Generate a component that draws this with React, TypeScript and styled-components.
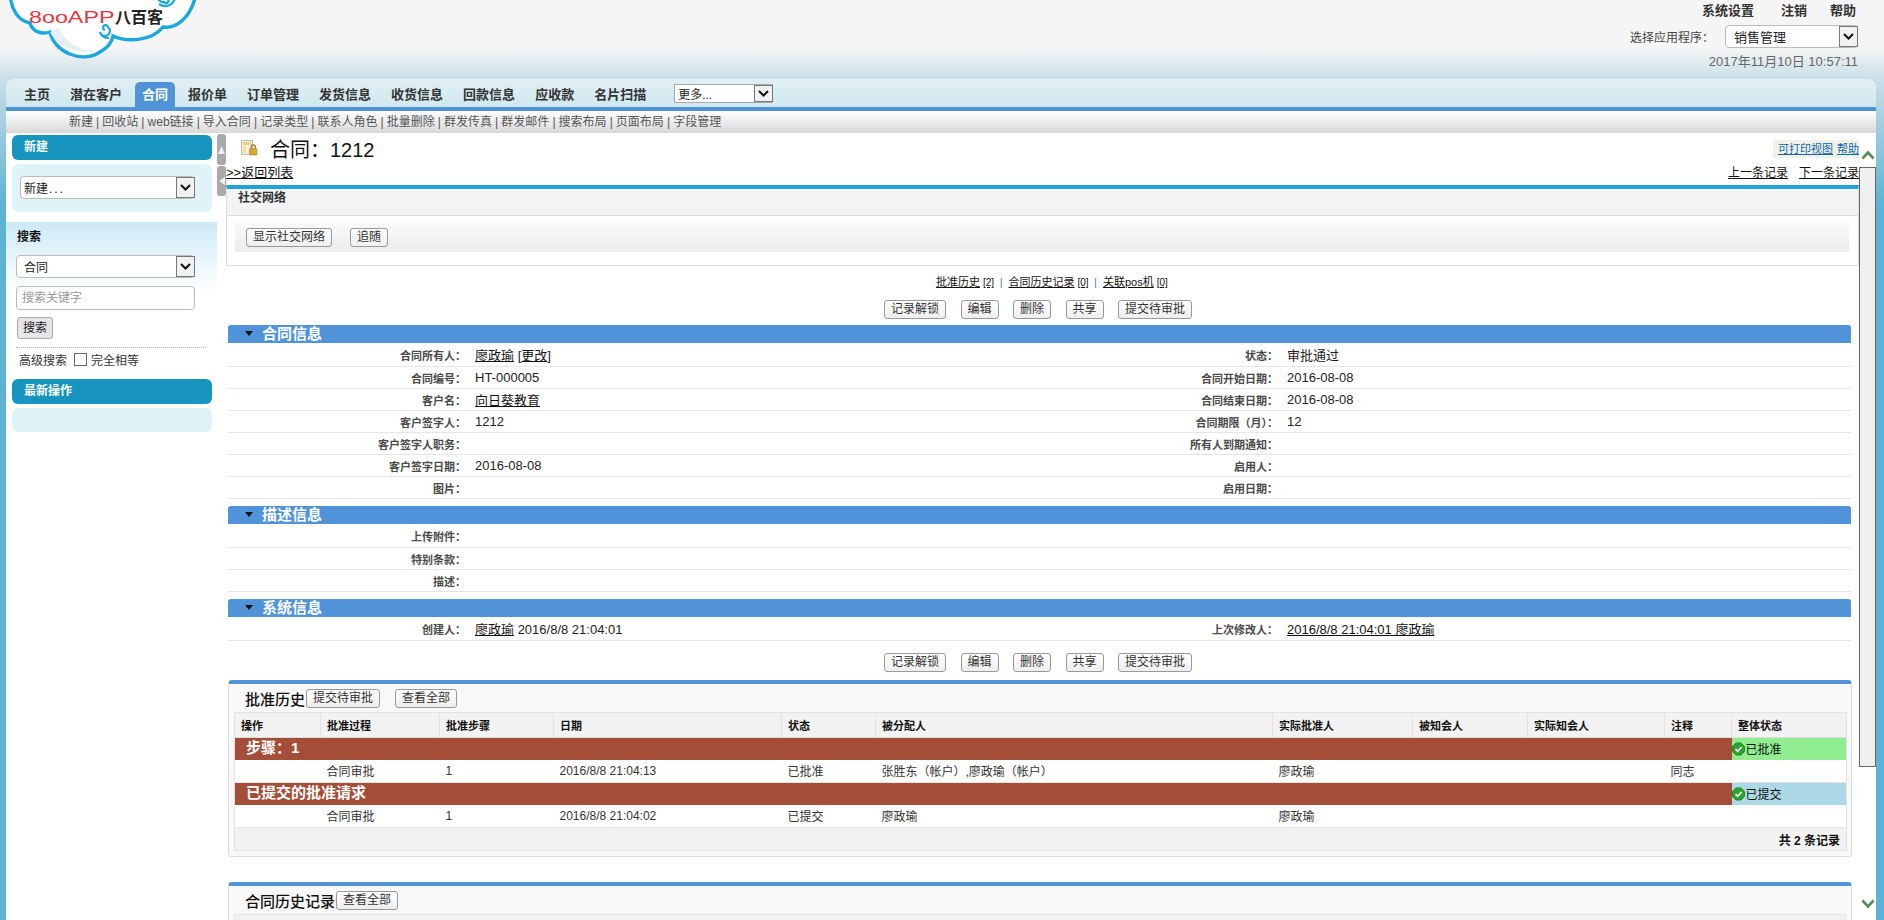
import React from 'react'
import styled, { createGlobalStyle } from 'styled-components'

const Global = createGlobalStyle`
  * { box-sizing: border-box; }
  html, body { margin: 0; padding: 0; height: 100%; overflow: hidden; background: #fff; }
  body { font-family: "Liberation Sans", "Noto Sans CJK SC", sans-serif; font-size: 12px; color: #222; }
  a { color: #111; }
`

const Page = styled.div`
  width: 1884px;
  height: 920px;
  overflow: hidden;
  display: flex;
  flex-direction: column;
`

const Header = styled.header`
  height: 79px;
  flex: none;
  display: flex;
  justify-content: space-between;
  background: linear-gradient(#f5f5f5 0, #f5f5f5 48px, #c8dfe8 79px);
`

const LogoBox = styled.div`
  position: relative;
  width: 200px;
  height: 60px;
  margin-left: 8px;
`

const LogoSvg = styled.svg`
  position: absolute;
  left: 0;
  top: 0;
`

const LogoRed = styled.span`
  position: absolute;
  left: 21px;
  top: 8px;
  font-size: 17px;
  line-height: 20px;
  color: #e8353f;
  white-space: nowrap;
  transform: scaleX(1.37);
  transform-origin: left center;
`

const LogoBlack = styled.span`
  position: absolute;
  left: 107px;
  top: 7px;
  font-size: 16px;
  line-height: 22px;
  font-weight: 700;
  color: #222;
  white-space: nowrap;
`

const TopRight = styled.div`
  width: 300px;
  padding: 3px 26px 0 0;
  display: flex;
  flex-direction: column;
  align-items: flex-end;
`

const TopLinks = styled.div`
  display: flex;
  font-size: 13px;
  font-weight: 700;
  line-height: 16px;
  color: #333;
  padding-right: 2px;
  span + span { margin-left: 27px; }
  span:last-child { margin-left: 23px; }
`

const AppRow = styled.div`
  display: flex;
  align-items: center;
  gap: 11px;
  margin-top: 6px;
  color: #444;
`

const DateText = styled.div`
  margin-top: 6px;
  font-size: 13px;
  line-height: 16px;
  color: #666;
`

const Select = styled.div<{ $w: number; $h?: number; $fs?: number; $pad?: number }>`
  width: ${p => p.$w}px;
  height: ${p => p.$h ?? 23}px;
  flex: none;
  display: flex;
  align-items: center;
  justify-content: space-between;
  background: #fff;
  border: 1px solid #bbb;
  border-radius: 4px;
  font-size: ${p => p.$fs ?? 12}px;
  color: #222;
  padding-left: ${p => p.$pad ?? 3}px;
`

const Arrow = styled.span`
  width: 19px;
  height: 100%;
  display: flex;
  align-items: center;
  justify-content: center;
  background: #f1f1f1;
  border: 1px solid #777;
  margin-right: -1px;
`

const Chevron = () => (
  <Arrow>
    <svg width="11" height="7" viewBox="0 0 11 7"><path d="M1 1l4.5 4.5L10 1" fill="none" stroke="#111" strokeWidth="2" /></svg>
  </Arrow>
)

const Dots = styled.span`
  letter-spacing: 2px;
  margin-left: 1px;
`

const Shell = styled.div`
  flex: 1;
  min-height: 0;
  display: flex;
  flex-direction: column;
  padding: 0 8px 0 6px;
  background: linear-gradient(#c8dfe8 0, #5db3d3 125px);
`

const TabBar = styled.nav`
  height: 28px;
  flex: none;
  display: flex;
  align-items: flex-end;
  padding-left: 8px;
  border-radius: 8px 8px 0 0;
  background: linear-gradient(#e1eff4, #cfe8ee);
`

const Tab = styled.div<{ $active?: boolean }>`
  height: 25px;
  line-height: 26px;
  font-size: 13px;
  font-weight: 700;
  white-space: nowrap;
  color: ${p => (p.$active ? '#fff' : '#333')};
  background: ${p => (p.$active ? '#5093d8' : 'transparent')};
  padding: 0 ${p => (p.$active ? 7 : 10)}px;
  margin: 0 ${p => (p.$active ? 3 : 0)}px;
  border-radius: 5px 5px 0 0;
`

const MoreSelect = styled(Select)`
  margin: 0 0 4px 18px;
  border-radius: 0;
  border-color: #aaa;
`

const BlueLine = styled.div`
  height: 4px;
  flex: none;
  background: #5093d8;
`

const SubNav = styled.div`
  height: 22px;
  flex: none;
  padding-left: 63px;
  line-height: 22px;
  word-spacing: -0.25px;
  color: #555;
  background: linear-gradient(#fff, #d8d8d8);
`

const Content = styled.div`
  flex: 1;
  min-height: 0;
  display: grid;
  grid-template-columns: 211px 9px 1633px 17px;
  background: #fff;
  overflow: hidden;
`

const Sidebar = styled.aside`
  padding-top: 2px;
`

const SideHead = styled.div`
  height: 25px;
  margin: 0 5px 0 6px;
  padding-left: 12px;
  line-height: 25px;
  font-weight: 700;
  color: #fff;
  background: #1795bf;
  border-radius: 6px;
`

const SideBody = styled.div<{ $h: number }>`
  height: ${p => p.$h}px;
  margin: 4px 5px 0 6px;
  padding: 12px 0 0 8px;
  background: #dff3f9;
  border-radius: 6px;
`

const SearchPanel = styled.div`
  margin: 10px 0 9px;
  padding: 8px 0 0 10px;
  background: linear-gradient(#cdeaf6, #fff 71px);
`

const SearchLabel = styled.div`
  font-weight: 700;
  line-height: 14px;
  color: #111;
  margin-left: 1px;
`

const SearchSelect = styled(Select)`
  margin-top: 11px;
`

const Keyword = styled.div`
  width: 179px;
  height: 24px;
  margin-top: 8px;
  padding-left: 5px;
  line-height: 22px;
  color: #999;
  background: #fff;
  border: 1px solid #bbb;
  border-radius: 4px;
`

const SearchButton = styled.div`
  width: 36px;
  height: 22px;
  margin: 7px 0 0 1px;
  text-align: center;
  line-height: 20px;
  color: #222;
  background: #e6e6e6;
  border: 1px solid #aaa;
  border-radius: 3px;
`

const Dotted = styled.div`
  width: 190px;
  margin-top: 8px;
  border-top: 1px dotted #aaa;
`

const AdvRow = styled.div`
  display: flex;
  align-items: center;
  height: 22px;
  margin-left: 3px;
  color: #333;
`

const Check = styled.span`
  width: 13px;
  height: 13px;
  margin: 0 4px 0 7px;
  background: #fff;
  border: 1px solid #666;
`

const HandleColumn = styled.div`
  padding-top: 1px;
`

const Handle = styled.div<{ $h: number }>`
  height: ${p => p.$h}px;
  margin-bottom: 1px;
  display: flex;
  align-items: center;
  justify-content: center;
  background: #a9a9a9;
  border-radius: 3px;
`

const Main = styled.main`
  min-width: 0;
  overflow: hidden;
`

const TitleRow = styled.div`
  height: 32px;
  display: flex;
  justify-content: space-between;
  padding-left: 15px;
`

const TitleLeft = styled.div`
  display: flex;
  align-items: flex-start;
  gap: 12px;
  padding-top: 7px;
`

const TitleText = styled.h1`
  margin: 1px 0 0;
  font-size: 20px;
  font-weight: 400;
  line-height: 19px;
  color: #111;
`

const PrintBox = styled.div`
  height: 18px;
  width: 86px;
  margin-top: 7px;
  text-align: right;
  font-size: 11px;
  line-height: 18px;
  background: #f1f1e9;
  a { color: #0a66a8; margin-left: 4px; }
`

const BackRow = styled.div`
  height: 20px;
  padding-top: 1px;
  display: flex;
  justify-content: space-between;
  line-height: 14px;
`

const BackLink = styled.a`
  font-size: 13px;
`

const PrevNext = styled.div`
  display: flex;
  gap: 11px;
`

const SocialBox = styled.section`
  height: 81px;
  border-top: 4px solid #21a3d3;
  border-left: 1px solid #ddd;
  border-right: 1px solid #ddd;
  border-bottom: 1px solid #ddd;
`

const SocialHead = styled.div`
  height: 27px;
  padding: 2px 0 0 11px;
  line-height: 14px;
  font-weight: 700;
  color: #333;
  background: #f3f3f3;
  border-bottom: 1px solid #ddd;
`

const SocialBar = styled.div`
  height: 31px;
  margin: 5px 9px 0 8px;
  padding: 7px 0 0 11px;
  display: flex;
  gap: 18px;
  background: linear-gradient(#fafafa, #ececec);
`

const Button = styled.span`
  display: inline-block;
  height: 19px;
  padding: 0 6px;
  line-height: 17px;
  font-size: 12px;
  white-space: nowrap;
  color: #333;
  background: linear-gradient(#fff, #eee);
  border: 1px solid #999;
  border-radius: 3px;
`

const RelatedLinks = styled.div`
  height: 34px;
  padding: 9px 0 0 710px;
  font-size: 11px;
  line-height: 14px;
  color: #555;
  a { margin-right: 3px; }
  a + a { font-size: 10px; margin-right: 0; }
  i { font-style: normal; margin: 0 6px 0 5.5px; color: #48a; }
`

const ButtonRow = styled.div<{ $top?: number }>`
  display: flex;
  gap: 14.5px;
  margin-top: ${p => p.$top ?? 0}px;
  padding-left: 658px;
`

const Section = styled.div<{ $top: number }>`
  width: 1623px;
  height: 18px;
  margin: ${p => p.$top}px 0 0 2px;
  display: flex;
  align-items: center;
  gap: 9px;
  padding: 0 0 1px 17px;
  font-size: 15px;
  line-height: 16px;
  font-weight: 700;
  color: #fff;
  background: #5093d8;
  border-radius: 3px 3px 0 0;
`

const Triangle = styled.span`
  width: 0;
  height: 0;
  border-left: 4px solid transparent;
  border-right: 4px solid transparent;
  border-top: 5px solid #111;
`

const Row = styled.div<{ $first?: boolean }>`
  width: 1623px;
  height: ${p => (p.$first ? 24 : 22)}px;
  margin-left: 2px;
  display: grid;
  grid-template-columns: 238px 574px 238px 1fr;
  align-items: center;
  border-bottom: 1px solid #e6e6e6;
`

const Label = styled.div`
  text-align: right;
  font-size: 11px;
  font-weight: 700;
  color: #4a4a4a;
`

const Value = styled.div`
  padding-left: 9px;
  font-size: 13px;
  color: #222;
`

const Panel = styled.section<{ $top: number }>`
  width: 1624px;
  margin: ${p => p.$top}px 0 0 2px;
  padding: 0 5px;
  background: #f8f8f8;
  border: 1px solid #ddd;
  border-top: 4px solid #5093d8;
  border-radius: 4px;
`

const PanelHead = styled.div`
  height: 28px;
  display: flex;
  align-items: center;
  gap: 15px;
  padding-left: 11px;
`

const PanelTitle = styled.h3`
  margin: 0 -15px 0 0;
  font-size: 15px;
  font-weight: 500;
  color: #111;
`

const HeadButton = styled(Button)`
  margin-left: 1px;
`

const Table = styled.table`
  width: 1612px;
  table-layout: fixed;
  border-collapse: collapse;
  background: #fff;
  border: 1px solid #e3e3e3;
  margin-bottom: 5px;
`

const Th = styled.th`
  height: 25px;
  padding: 0 0 0 6px;
  text-align: left;
  font-size: 11px;
  font-weight: 700;
  color: #111;
  background: #f2f2f2;
  border-right: 1px solid #e3e3e3;
  border-bottom: 1px solid #ddd;
`

const Td = styled.td`
  height: 23px;
  padding: 0 0 0 6px;
  font-size: 12px;
  color: #333;
  white-space: nowrap;
  border-bottom: 1px solid #e6e6e6;
`

const GroupTd = styled.td`
  height: 22px;
  padding: 0 0 2px 11px;
  font-size: 15px;
  line-height: 18px;
  font-weight: 700;
  color: #fff;
  background: #a44e39;
`

const StatusTd = styled.td<{ $bg: string }>`
  padding: 0;
  font-size: 12px;
  color: #111;
  background: ${p => p.$bg};
`

const StatusInner = styled.span`
  display: flex;
  align-items: center;
  gap: 1px;
  svg { flex: none; }
`

const TableFoot = styled.td`
  height: 23px;
  padding-right: 6px;
  text-align: right;
  font-weight: 700;
  color: #111;
  background: #f2f2f2;
`

const CutBox = styled.div`
  height: 30px;
  padding: 3px 0 0 7px;
  font-weight: 700;
  color: #111;
  background: #f2f2f2;
  border: 1px solid #e3e3e3;
`

const Scroll = styled.div`
  padding-top: 17px;
  display: flex;
  flex-direction: column;
  align-items: center;
  overflow: hidden;
`

const Thumb = styled.div`
  width: 17px;
  height: 600px;
  margin-top: 7px;
  flex: none;
  background: #f0f0f0;
  border: 1px solid #666;
`

const DownArrow = styled.div`
  margin-top: 131px;
`

const ScrollChevron = ({ up }: { up?: boolean }) => (
  <svg width="14" height="10" viewBox="0 0 14 10">
    <path d={up ? 'M1.5 8.5L7 2.5l5.5 6' : 'M1.5 1.5L7 7.5l5.5-6'} fill="none" stroke="#5d8a5d" strokeWidth="2.6" />
  </svg>
)

const Logo = () => (
  <LogoSvg width="200" height="60" viewBox="0 0 200 60">
    <path d="M2 -6C3 9 10 21 22 23C24 31 33 35 42 32C46 52 74 64 92 52C99 48 104 42 105 36C118 42 143 42 155 27C168 29 183 18 188 -6Z" fill="#fff" stroke="#19a7de" strokeWidth="3.4" />
    <path d="M42 32C50 47 70 56 88 50C72 51 58 44 51 28Z" fill="#e6eef4" />
    <path d="M97 30a2.500 2.500 0 1 1 3-3a5 5 0 1 1-8 5c1 4 5 6 9 6" fill="#fff" stroke="#19a7de" strokeWidth="2.2" />
    <path d="M160 -1a2.500 2.500 0 0 1-4 3a5 5 0 0 1-6-5" fill="none" stroke="#19a7de" strokeWidth="2.2" />
    <path d="M151 4c6 4 14 2 16-6" fill="none" stroke="#19a7de" strokeWidth="2.2" />
  </LogoSvg>
)

const RecordIcon = () => (
  <svg width="17" height="16" viewBox="0 0 17 16">
    <rect x="0.5" y="0.5" width="11" height="14" fill="#f4f1e6" stroke="#bbb" />
    <rect x="2" y="2" width="8" height="3" fill="#f1cf73" />
    <rect x="2" y="6" width="3" height="7" fill="#f5dd9b" />
    <path d="M10 8.5V7a2.2 2.2 0 0 1 4.4 0v1.5" fill="none" stroke="#9b7a22" strokeWidth="1.2" />
    <rect x="8.5" y="8.5" width="7.5" height="6.5" rx="1" fill="#dcaa32" stroke="#a67c1c" strokeWidth="0.6" />
  </svg>
)

const OkIcon = () => (
  <svg width="13" height="14" viewBox="0 0 13 14">
    <path d="M4 1h5l3.5 3.5v5L9 13H4L.5 9.500v-5z" fill="#2aa52c" stroke="#1d8a22" />
    <path d="M3.500 7l2.200 2.300 4-4.300" fill="none" stroke="#fff" strokeWidth="1.800" />
  </svg>
)

const tabs = ['主页', '潜在客户', '合同', '报价单', '订单管理', '发货信息', '收货信息', '回款信息', '应收款', '名片扫描']
const subLinks = ['新建', '回收站', 'web链接', '导入合同', '记录类型', '联系人角色', '批量删除', '群发传真', '群发邮件', '搜索布局', '页面布局', '字段管理']
const actions = ['记录解锁', '编辑', '删除', '共享', '提交待审批']
const infoRows: [string, React.ReactNode, string, React.ReactNode][] = [
  ['合同所有人：', <><a href="#">廖政瑜</a> [<a href="#">更改</a>]</>, '状态：', '审批通过'],
  ['合同编号：', 'HT-000005', '合同开始日期：', '2016-08-08'],
  ['客户名：', <a href="#">向日葵教育</a>, '合同结束日期：', '2016-08-08'],
  ['客户签字人：', '1212', '合同期限（月）：', '12'],
  ['客户签字人职务：', '', '所有人到期通知：', ''],
  ['客户签字日期：', '2016-08-08', '启用人：', ''],
  ['图片：', '', '启用日期：', ''],
]
const descRows = ['上传附件：', '特别条款：', '描述：']
const columns: [string, number][] = [
  ['操作', 86], ['批准过程', 119], ['批准步骤', 114], ['日期', 228], ['状态', 94], ['被分配人', 397],
  ['实际批准人', 140], ['被知会人', 115], ['实际知会人', 137], ['注释', 67], ['整体状态', 115],
]

function App() {
  return (
    <Page>
      <Global />
      <Header>
        <LogoBox>
          <Logo />
          <LogoRed>8ooAPP</LogoRed>
          <LogoBlack>八百客</LogoBlack>
        </LogoBox>
        <TopRight>
          <TopLinks>
            <span>系统设置</span>
            <span>注销</span>
            <span>帮助</span>
          </TopLinks>
          <AppRow>
            <span>选择应用程序：</span>
            <Select $w={133} $fs={13} $pad={8}>销售管理<Chevron /></Select>
          </AppRow>
          <DateText>2017年11月10日 10:57:11</DateText>
        </TopRight>
      </Header>
      <Shell>
        <TabBar>
          {tabs.map(t => <Tab key={t} $active={t === '合同'}>{t}</Tab>)}
          <MoreSelect $w={99} $h={19}>更多...<Chevron /></MoreSelect>
        </TabBar>
        <BlueLine />
        <SubNav>{subLinks.join(' | ')}</SubNav>
        <Content>
          <Sidebar>
            <SideHead>新建</SideHead>
            <SideBody $h={48}>
              <Select $w={175}><span>新建<Dots>...</Dots></span><Chevron /></Select>
            </SideBody>
            <SearchPanel>
              <SearchLabel>搜索</SearchLabel>
              <SearchSelect $w={179} $pad={7}>合同<Chevron /></SearchSelect>
              <Keyword>搜索关键字</Keyword>
              <SearchButton>搜索</SearchButton>
              <Dotted />
              <AdvRow>高级搜索<Check />完全相等</AdvRow>
            </SearchPanel>
            <SideHead>最新操作</SideHead>
            <SideBody $h={24} />
          </Sidebar>
          <HandleColumn>
            <Handle $h={31}>
              <svg width="7" height="8" viewBox="0 0 7 8"><path d="M3.500 0L7 8H0z" fill="#eee" /></svg>
            </Handle>
            <Handle $h={30}>
              <svg width="6" height="8" viewBox="0 0 6 8"><path d="M0 4L6 0v8z" fill="#eee" /></svg>
            </Handle>
          </HandleColumn>
          <Main>
            <TitleRow>
              <TitleLeft>
                <RecordIcon />
                <TitleText>合同：1212</TitleText>
              </TitleLeft>
              <PrintBox><a href="#">可打印视图</a><a href="#">帮助</a></PrintBox>
            </TitleRow>
            <BackRow>
              <BackLink href="#">&gt;&gt;返回列表</BackLink>
              <PrevNext><a href="#">上一条记录</a><a href="#">下一条记录</a></PrevNext>
            </BackRow>
            <SocialBox>
              <SocialHead>社交网络</SocialHead>
              <SocialBar>
                <Button>显示社交网络</Button>
                <Button>追随</Button>
              </SocialBar>
            </SocialBox>
            <RelatedLinks>
              <a href="#">批准历史</a><a href="#">[2]</a><i>|</i>
              <a href="#">合同历史记录</a><a href="#">[0]</a><i>|</i>
              <a href="#">关联pos机</a><a href="#">[0]</a>
            </RelatedLinks>
            <ButtonRow>{actions.map(a => <Button key={a}>{a}</Button>)}</ButtonRow>
            <Section $top={6}><Triangle />合同信息</Section>
            {infoRows.map((r, i) => (
              <Row key={r[0]} $first={i === 0}>
                <Label>{r[0]}</Label><Value>{r[1]}</Value><Label>{r[2]}</Label><Value>{r[3]}</Value>
              </Row>
            ))}
            <Section $top={7}><Triangle />描述信息</Section>
            {descRows.map((d, i) => (
              <Row key={d} $first={i === 0}><Label>{d}</Label><Value /><div /><div /></Row>
            ))}
            <Section $top={7}><Triangle />系统信息</Section>
            <Row $first>
              <Label>创建人：</Label>
              <Value><a href="#">廖政瑜</a> 2016/8/8 21:04:01</Value>
              <Label>上次修改人：</Label>
              <Value><a href="#">2016/8/8 21:04:01 廖政瑜</a></Value>
            </Row>
            <ButtonRow $top={12}>{actions.map(a => <Button key={a}>{a}</Button>)}</ButtonRow>
            <Panel $top={8}>
              <PanelHead>
                <PanelTitle>批准历史</PanelTitle>
                <HeadButton>提交待审批</HeadButton>
                <Button>查看全部</Button>
              </PanelHead>
              <Table>
                <colgroup>{columns.map(c => <col key={c[0]} width={c[1]} />)}</colgroup>
                <thead>
                  <tr>{columns.map(c => <Th key={c[0]}>{c[0]}</Th>)}</tr>
                </thead>
                <tbody>
                  <tr>
                    <GroupTd colSpan={10}>步骤：1</GroupTd>
                    <StatusTd $bg="#90ee90"><StatusInner><OkIcon />已批准</StatusInner></StatusTd>
                  </tr>
                  <tr>
                    <Td />
                    <Td>合同审批</Td>
                    <Td>1</Td>
                    <Td>2016/8/8 21:04:13</Td>
                    <Td>已批准</Td>
                    <Td>张胜东（帐户）,廖政瑜（帐户）</Td>
                    <Td>廖政瑜</Td>
                    <Td />
                    <Td />
                    <Td>同志</Td>
                    <Td />
                  </tr>
                  <tr>
                    <GroupTd colSpan={10}>已提交的批准请求</GroupTd>
                    <StatusTd $bg="#add8e6"><StatusInner><OkIcon />已提交</StatusInner></StatusTd>
                  </tr>
                  <tr>
                    <Td />
                    <Td>合同审批</Td>
                    <Td>1</Td>
                    <Td>2016/8/8 21:04:02</Td>
                    <Td>已提交</Td>
                    <Td>廖政瑜</Td>
                    <Td>廖政瑜</Td>
                    <Td />
                    <Td />
                    <Td />
                    <Td />
                  </tr>
                  <tr>
                    <TableFoot colSpan={11}>共 2 条记录</TableFoot>
                  </tr>
                </tbody>
              </Table>
            </Panel>
            <Panel $top={25}>
              <PanelHead>
                <PanelTitle>合同历史记录</PanelTitle>
                <HeadButton>查看全部</HeadButton>
              </PanelHead>
              <CutBox>修改历史的记录</CutBox>
            </Panel>
          </Main>
          <Scroll>
            <ScrollChevron up />
            <Thumb />
            <DownArrow><ScrollChevron /></DownArrow>
          </Scroll>
        </Content>
      </Shell>
    </Page>
  )
}

export default App
